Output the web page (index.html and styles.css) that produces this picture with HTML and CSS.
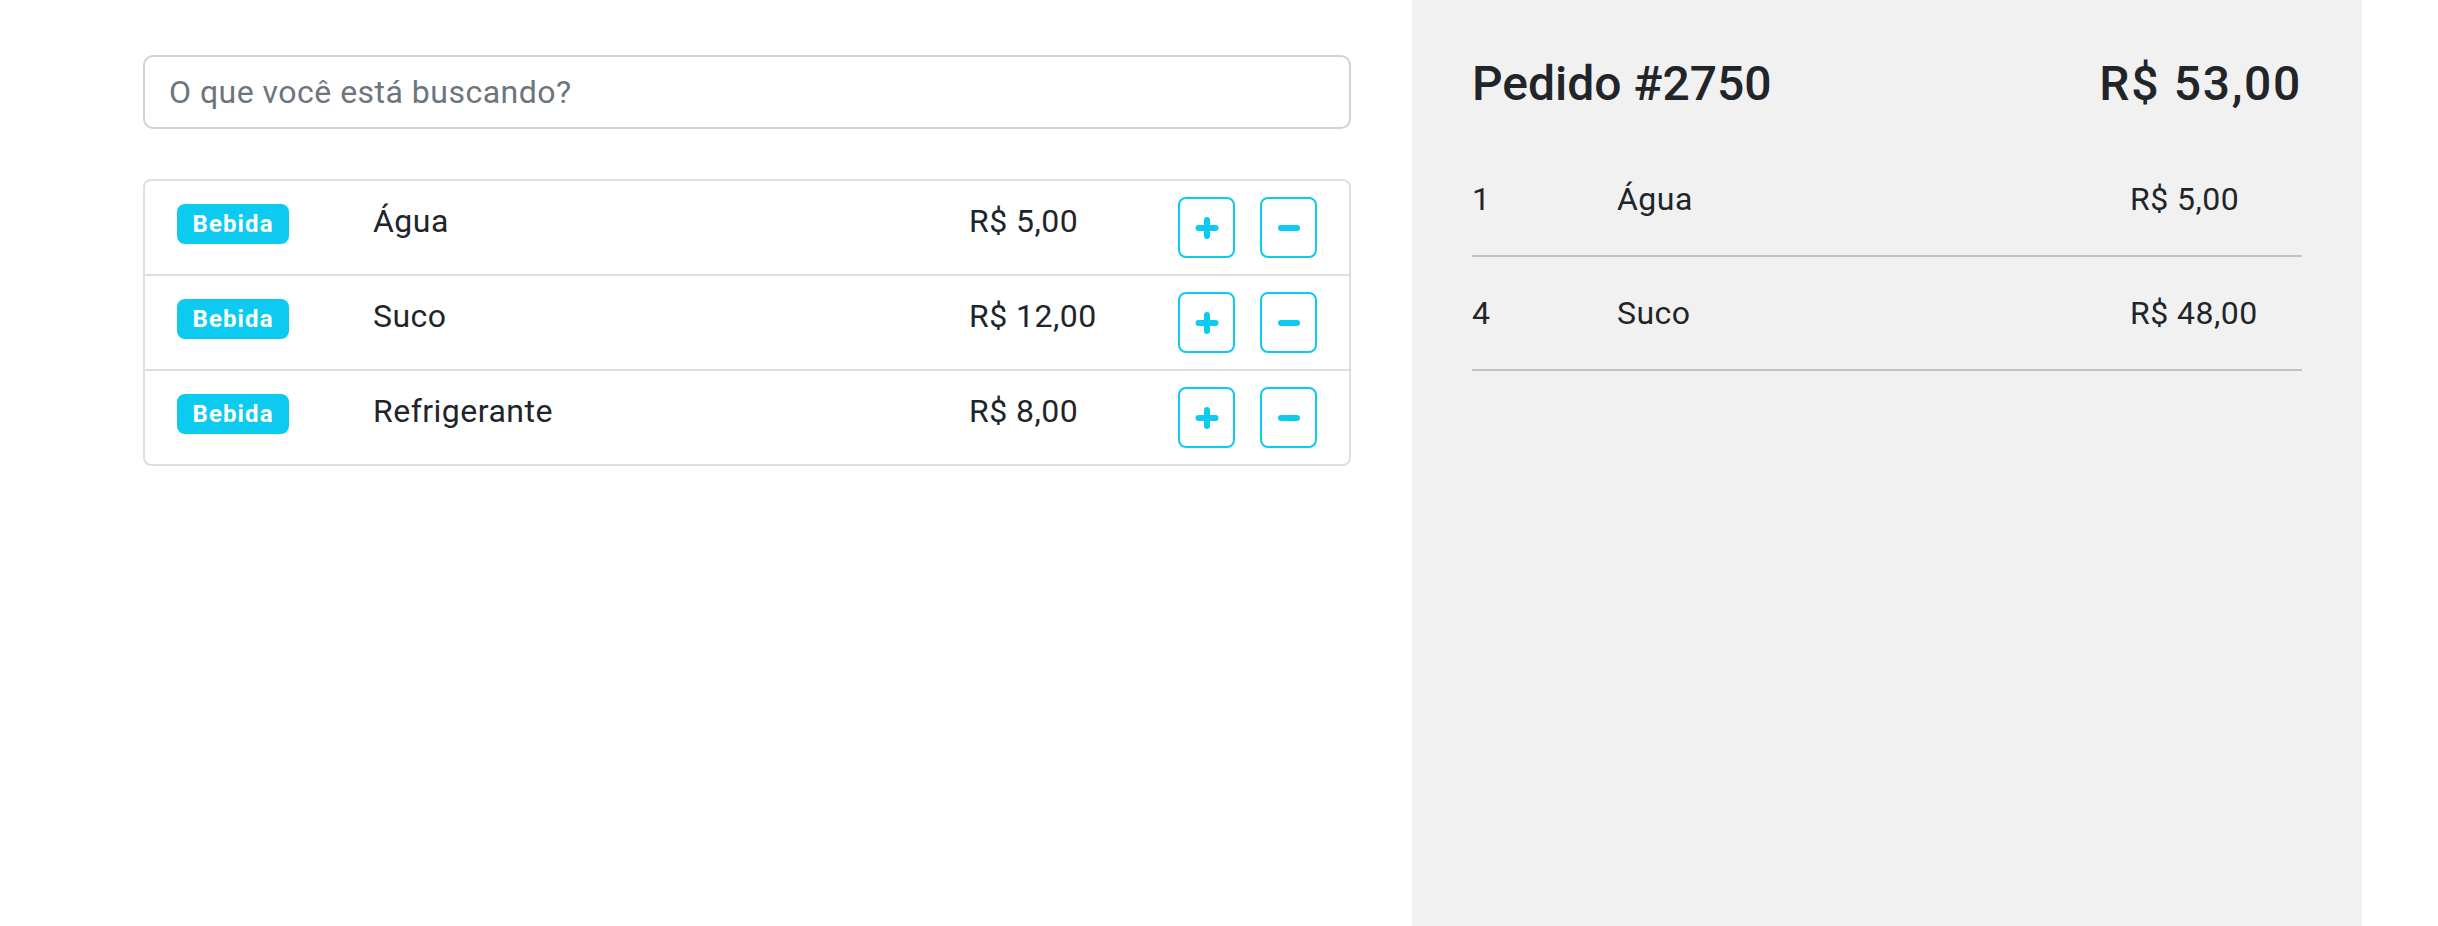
FILE: index.html
```html
<!DOCTYPE html>
<html lang="pt-BR">
<head>
<meta charset="utf-8">
<title>Pedido #2750</title>
<link rel="stylesheet" href="styles.css">
</head>
<body>
<div class="page">
  <main class="catalog">
    <input class="search" type="text" placeholder="O que você está buscando?">
    <ul class="products">
      <li class="product">
        <div class="cat"><span class="badge">Bebida</span></div>
        <div class="name">Água</div>
        <div class="price">R$ 5,00</div>
        <div class="actions">
          <button class="qty" type="button" aria-label="Adicionar"><svg viewBox="0 0 24 24" width="24" height="24"><path d="M12 4v16M3.5 12h17"/></svg></button>
          <button class="qty" type="button" aria-label="Remover"><svg viewBox="0 0 24 24" width="24" height="24"><path d="M4 12h16"/></svg></button>
        </div>
      </li>
      <li class="product">
        <div class="cat"><span class="badge">Bebida</span></div>
        <div class="name">Suco</div>
        <div class="price">R$ 12,00</div>
        <div class="actions">
          <button class="qty" type="button" aria-label="Adicionar"><svg viewBox="0 0 24 24" width="24" height="24"><path d="M12 4v16M3.5 12h17"/></svg></button>
          <button class="qty" type="button" aria-label="Remover"><svg viewBox="0 0 24 24" width="24" height="24"><path d="M4 12h16"/></svg></button>
        </div>
      </li>
      <li class="product">
        <div class="cat"><span class="badge">Bebida</span></div>
        <div class="name">Refrigerante</div>
        <div class="price">R$ 8,00</div>
        <div class="actions">
          <button class="qty" type="button" aria-label="Adicionar"><svg viewBox="0 0 24 24" width="24" height="24"><path d="M12 4v16M3.5 12h17"/></svg></button>
          <button class="qty" type="button" aria-label="Remover"><svg viewBox="0 0 24 24" width="24" height="24"><path d="M4 12h16"/></svg></button>
        </div>
      </li>
    </ul>
  </main>
  <aside class="order">
    <header class="order-head">
      <h4 class="order-title">Pedido #2750</h4>
      <span class="order-total">R$ 53,00</span>
    </header>
    <div class="order-line"><span>1</span><span>Água</span><span>R$ 5,00</span></div>
    <div class="order-line"><span>4</span><span>Suco</span><span>R$ 48,00</span></div>
  </aside>
</div>
</body>
</html>
```
FILE: styles.css
```css
* { box-sizing: border-box; }

html, body {
  margin: 0;
  background: #fff;
}

body {
  font-family: Roboto, "Liberation Sans", Arial, sans-serif;
  color: #212529;
  font-size: 32px;
  line-height: 48px;
  letter-spacing: 0.015em;
}

.page {
  display: flex;
  align-items: stretch;
  gap: 61px;
  min-height: 100vh;
  padding-left: 143px;
}

.catalog {
  width: 1208px;
  flex: none;
  padding-top: 55px;
  display: flex;
  flex-direction: column;
}

.search {
  display: block;
  width: 100%;
  height: 74px;
  padding: 0 24px;
  border: 2px solid #ced4da;
  border-radius: 10px;
  font: inherit;
  letter-spacing: inherit;
  color: #212529;
  background: #fff;
  outline: none;
}

.search::placeholder {
  color: #6c757d;
  opacity: 1;
}

.products {
  list-style: none;
  margin: 50px 0 0;
  padding: 0;
  border: 2px solid #dfdfdf;
  border-radius: 8px;
}

.product {
  display: grid;
  grid-template-columns: 196px 596px 1fr auto;
  align-items: start;
  padding: 16px 32px;
}

.product + .product {
  border-top: 2px solid #dfdfdf;
}

.badge {
  display: inline-block;
  padding: 8.4px 15.6px;
  font-size: 24px;
  font-weight: 700;
  line-height: 1;
  letter-spacing: 0.045em;
  color: #fff;
  background: #0dcaf0;
  border-radius: 8px;
  vertical-align: baseline;
}

.actions {
  display: flex;
  gap: 25px;
}

.qty {
  width: 57px;
  height: 61px;
  padding: 0;
  display: flex;
  align-items: center;
  justify-content: center;
  background: transparent;
  border: 2px solid #0dcaf0;
  border-radius: 8px;
  cursor: pointer;
}

.qty svg {
  display: block;
  fill: none;
  stroke: #0dcaf0;
  stroke-width: 6;
  stroke-linecap: round;
}

.order {
  width: 950px;
  flex: none;
  background: #f1f1f1;
  padding: 55px 60px 0;
}

.order-head {
  display: flex;
  justify-content: space-between;
  align-items: baseline;
  margin-bottom: 30px;
}

.order-title,
.order-total {
  margin: 0;
  font-size: 48px;
  font-weight: 500;
  line-height: 1.2;
}

.order-title {
  letter-spacing: 0;
}

.order-total {
  letter-spacing: 0.035em;
}

.order-line {
  display: grid;
  grid-template-columns: 145px 513px 1fr;
  padding: 32px 0;
  border-bottom: 2px solid #c2c2c2;
}
```
